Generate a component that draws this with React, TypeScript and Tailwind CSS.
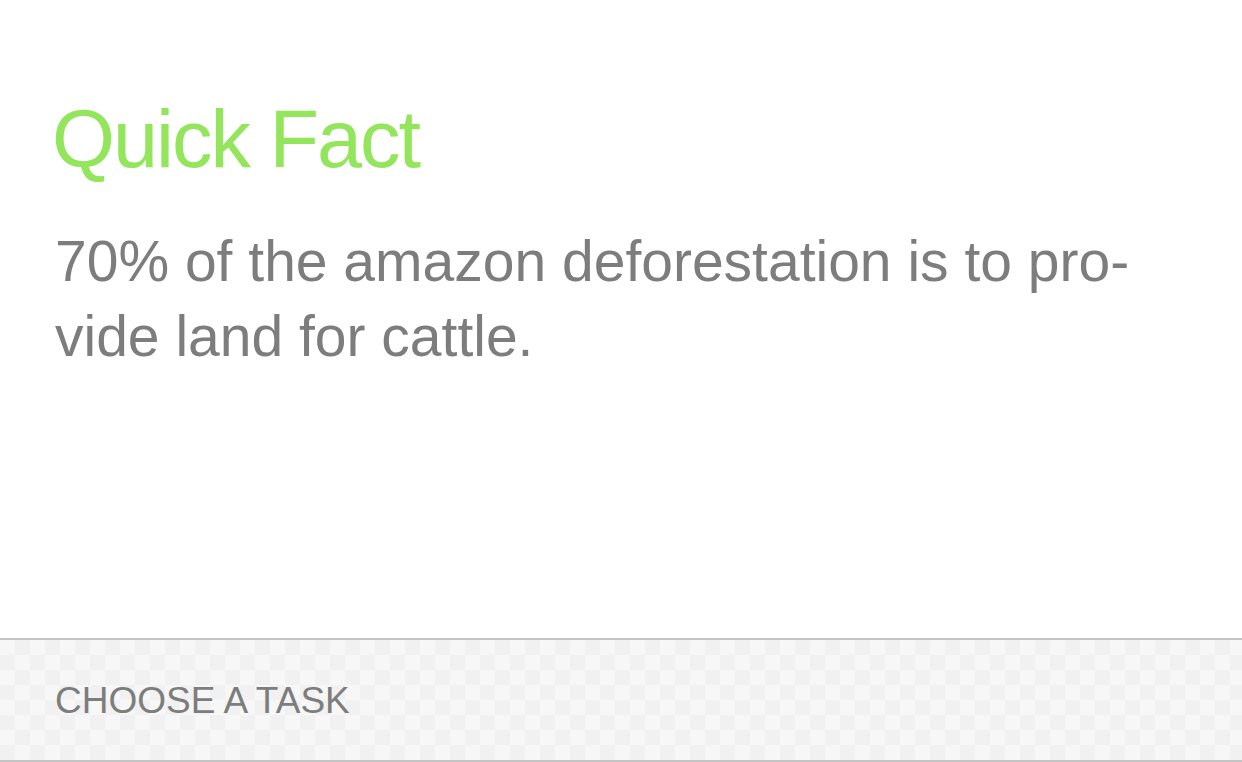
export default function App() {
  return (
    <div className="w-[1242px] h-[762px] bg-white flex flex-col overflow-hidden font-['Liberation_Sans',Arial,sans-serif]">
      <div className="flex-1 pl-[52px] pt-[95px]">
        <h1 className="text-[81px] leading-[88px] font-light tracking-[-2px] text-[#93e55c]">Quick Fact</h1>
        <p className="mt-[41px] pl-[3px] text-[57px] leading-[75px] font-light text-[#7d7d7d]">
          70% of the amazon deforestation is to pro-
          <br />
          vide land for cattle.
        </p>
      </div>
      <div className="h-[124px] shrink-0 border-y-2 border-[#c4c4c4] bg-[#f6f6f6] bg-[repeating-conic-gradient(#f1f1f1_0_25%,#f7f7f7_0_50%)] bg-size-[30px_30px] flex items-center pl-[55px]">
        <span className="text-[37px] leading-[37px] text-[#7d7d7d]">CHOOSE A TASK</span>
      </div>
    </div>
  );
}
